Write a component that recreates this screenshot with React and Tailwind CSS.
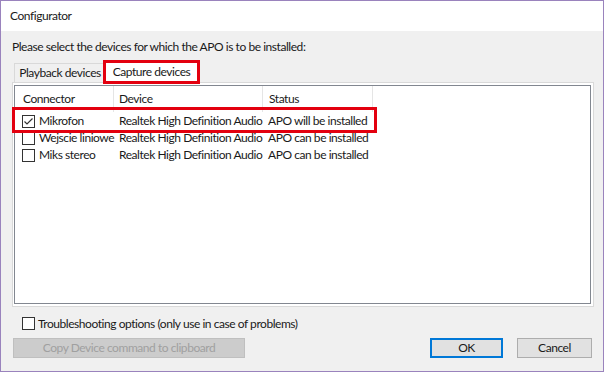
const font = { fontFamily: '"Segoe UI", Lato, "Noto Sans", sans-serif' };

function Check({ checked }) {
  return (
    <span className="flex h-[13px] w-[13px] shrink-0 items-center justify-center border border-[#333] bg-white">
      {checked && (
        <svg width="11" height="11" viewBox="0 0 11 11">
          <path d="M1.5 5.5 L4 8 L9.5 2.5" fill="none" stroke="#333" strokeWidth="1.2" />
        </svg>
      )}
    </span>
  );
}

const rows = [
  { name: "Mikrofon", status: "APO will be installed", checked: true },
  { name: "Wejscie liniowe", status: "APO can be installed" },
  { name: "Miks stereo", status: "APO can be installed" },
];

export default function App() {
  return (
    <div
      className="flex h-[372px] w-[604px] flex-col whitespace-nowrap border border-[#9a83bd] text-[12px] tracking-[-0.45px] text-[#1a1a1a]"
      style={font}
    >
      {/* Title bar */}
      <div className="flex h-[30px] shrink-0 items-center bg-white pl-[9px]">Configurator</div>

      {/* Body */}
      <div className="flex flex-1 flex-col bg-[#f0f0f0] pl-[11px] pr-[9px] pt-[8px]">
        <div className="h-[16px] leading-[16px]">Please select the devices for which the APO is to be installed:</div>

        {/* Tabs */}
        <div className="mt-[5px] flex h-[22px] items-start pl-[2px]">
          <div className="mt-[3px] flex h-[19px] w-[91px] items-center justify-center border border-r-0 border-b-0 border-[#d9d9d9] bg-[#f0f0f0]">
            Playback devices
          </div>
          <div className="relative z-10 flex h-[23px] w-[93px] items-center justify-center border border-b-0 border-[#d9d9d9] bg-white">
            Capture devices
            <span className="absolute -left-[3px] -right-[3px] -top-px -bottom-px border-[3px] border-[#e3000f]" />
          </div>
        </div>

        {/* Tab panel */}
        <div className="flex h-[225px] flex-col border border-[#d9d9d9] bg-white pb-[2px] pl-px pr-[2px] pt-[2px]">
          <div className="relative flex-1 border border-[#828790] bg-white">
            {/* Header */}
            <div className="grid h-[26px] grid-cols-[98px_149px_110px_1fr]">
              <div className="flex items-center pl-[8px]">Connector</div>
              <div className="flex items-center border-l border-[#e5e5e5] pl-[5px]">Device</div>
              <div className="flex items-center border-l border-[#e5e5e5] pl-[6px]">Status</div>
              <div className="border-l border-[#e5e5e5]" />
            </div>
            {rows.map((r) => (
              <div key={r.name} className="grid h-[17px] grid-cols-[98px_149px_110px_1fr] items-center">
                <div className="flex items-center gap-[4px] pl-[7px]">
                  <Check checked={r.checked} />
                  {r.name}
                </div>
                <div className="pl-[6px]">Realtek High Definition Audio</div>
                <div className="pl-[6px]">{r.status}</div>
                <div />
              </div>
            ))}
            {/* highlight around first row */}
            <span className="absolute left-[-3px] top-[21px] h-[26px] w-[365px] border-[3px] border-[#e3000f]" />
          </div>
        </div>

        {/* Troubleshooting */}
        <div className="ml-[10px] mt-[10px] flex h-[13px] items-center gap-[3px]">
          <Check />
          <span>Troubleshooting options (only use in case of problems)</span>
        </div>

        {/* Buttons */}
        <div className="mt-[8px] flex h-[20px] items-center">
          <div className="ml-px flex h-[20px] w-[232px] items-center justify-center border border-[#bfbfbf] bg-[#cccccc] text-[#a0a0a0]">
            Copy Device command to clipboard
          </div>
          <div className="ml-auto flex h-[20px] w-[73px] items-center justify-center border-2 border-[#0078d7] bg-[#e1e1e1]">
            OK
          </div>
          <div className="ml-[14px] mr-[2px] flex h-[20px] w-[75px] items-center justify-center border border-[#adadad] bg-[#e1e1e1]">
            Cancel
          </div>
        </div>
      </div>
    </div>
  );
}
